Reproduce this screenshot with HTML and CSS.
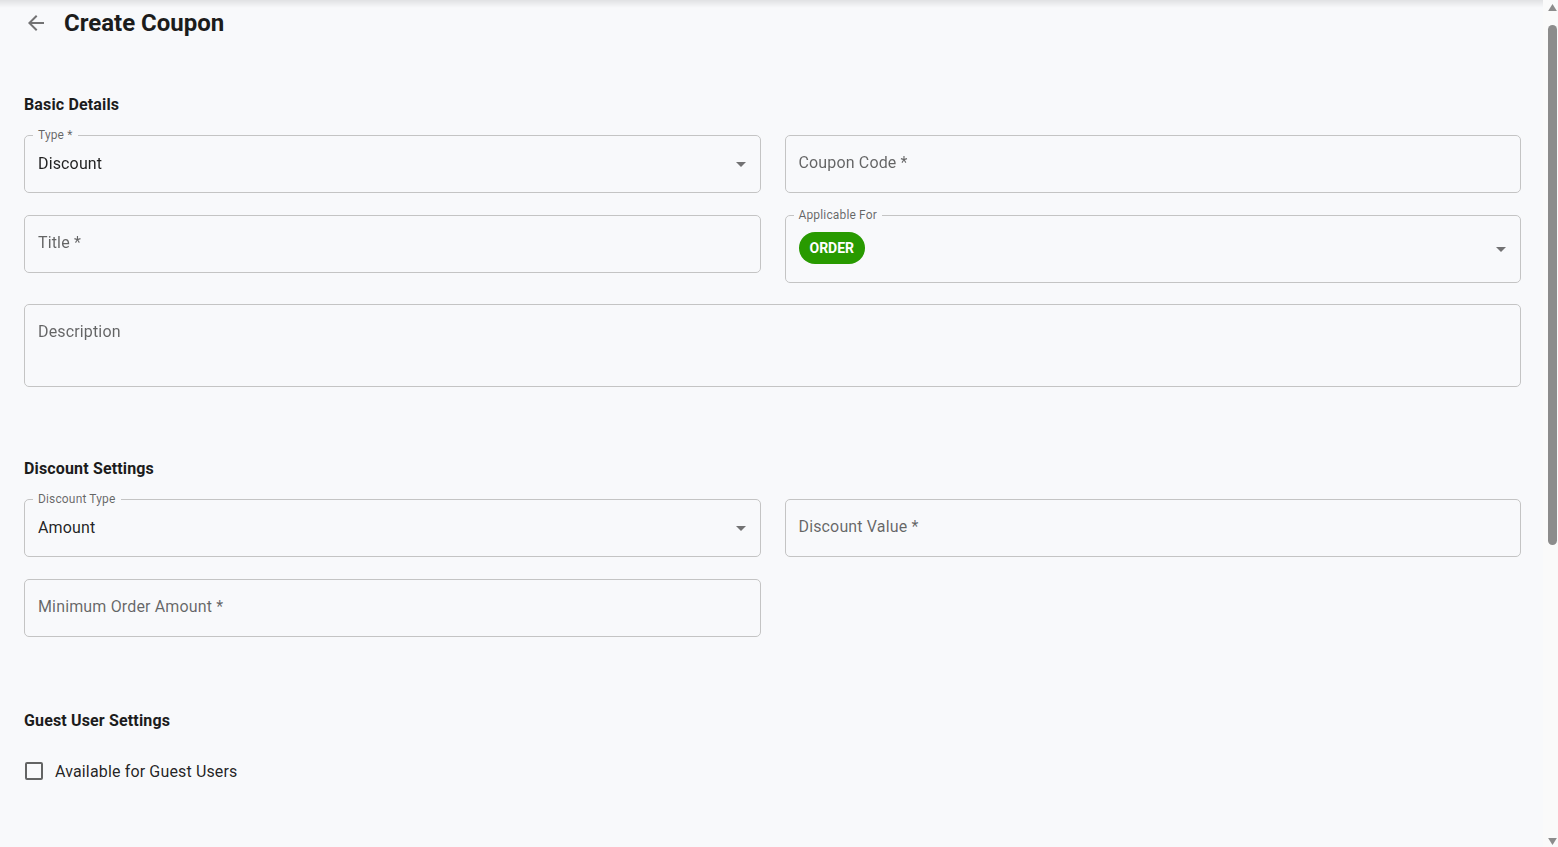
FILE: index.html
```html
<!DOCTYPE html>
<html lang="en">
<head>
  <meta charset="UTF-8">
  <title>Create Coupon</title>
  <link rel="stylesheet" href="styles.css">
</head>
<body>
  <div class="top-shade"></div>

  <!-- window scrollbar -->
  <div class="scrollbar">
    <svg class="sb-arrow up" viewBox="0 0 10 8" width="10" height="8"><path d="M5 0l5 8H0z"/></svg>
    <div class="sb-thumb"></div>
    <svg class="sb-arrow down" viewBox="0 0 10 8" width="10" height="8"><path d="M0 0h10L5 8z"/></svg>
  </div>

  <main class="page">
    <header class="page-header">
      <button class="back-btn" aria-label="Back">
        <svg viewBox="0 0 24 24" width="24" height="24"><path d="M20 11H7.83l5.59-5.59L12 4l-8 8 8 8 1.41-1.41L7.83 13H20v-2z"/></svg>
      </button>
      <h1>Create Coupon</h1>
    </header>

    <!-- Basic details -->
    <section class="section">
      <h2>Basic Details</h2>
      <div class="grid">
        <div class="field select">
          <span class="float-label">Type *</span>
          <span class="value">Discount</span>
          <svg class="arrow" viewBox="0 0 24 24" width="24" height="24"><path d="M7 10l5 5 5-5z"/></svg>
        </div>
        <div class="field">
          <span class="placeholder">Coupon Code *</span>
        </div>
        <div class="field">
          <span class="placeholder">Title *</span>
        </div>
        <div class="field select tall">
          <span class="float-label">Applicable For</span>
          <span class="chip">ORDER</span>
          <svg class="arrow" viewBox="0 0 24 24" width="24" height="24"><path d="M7 10l5 5 5-5z"/></svg>
        </div>
        <div class="field multiline wide">
          <span class="placeholder">Description</span>
        </div>
      </div>
    </section>

    <!-- Discount settings -->
    <section class="section">
      <h2>Discount Settings</h2>
      <div class="grid">
        <div class="field select">
          <span class="float-label">Discount Type</span>
          <span class="value">Amount</span>
          <svg class="arrow" viewBox="0 0 24 24" width="24" height="24"><path d="M7 10l5 5 5-5z"/></svg>
        </div>
        <div class="field">
          <span class="placeholder">Discount Value *</span>
        </div>
        <div class="field">
          <span class="placeholder">Minimum Order Amount *</span>
        </div>
      </div>
    </section>

    <!-- Guest users -->
    <section class="section last">
      <h2>Guest User Settings</h2>
      <label class="check-row">
        <span class="check-box"></span>
        <span>Available for Guest Users</span>
      </label>
    </section>
  </main>
</body>
</html>
```

FILE: styles.css
```css
html, body {
  margin: 0;
  padding: 0;
}
body {
  font-family: Roboto, "Liberation Sans", Arial, sans-serif;
  background: #f8f9fb;
  color: rgba(0, 0, 0, 0.87);
  letter-spacing: 0.15px;
}
.top-shade {
  position: fixed;
  top: 0;
  left: 0;
  right: 0;
  height: 8px;
  background: linear-gradient(rgba(0, 0, 0, 0.09), rgba(0, 0, 0, 0));
  pointer-events: none;
}
.scrollbar {
  position: fixed;
  top: 0;
  right: 0;
  bottom: 0;
  width: 15px;
  background: #fafafa;
}
.sb-thumb {
  position: absolute;
  top: 25px;
  left: 5px;
  width: 9px;
  height: 520px;
  border-radius: 5px;
  background: #8c8c8c;
}
.sb-arrow {
  position: absolute;
  left: 5px;
  fill: #8c8c8c;
  width: 9px;
  height: 7px;
}
.sb-arrow.up {
  top: 4px;
}
.sb-arrow.down {
  bottom: 2px;
}
.page {
  padding: 0 37px 530px 24px;
}
.page-header {
  height: 46px;
  display: flex;
  align-items: center;
  gap: 16px;
}
.back-btn {
  border: none;
  background: none;
  padding: 0;
  width: 24px;
  height: 24px;
  cursor: pointer;
  display: flex;
}
.back-btn svg {
  fill: rgba(0, 0, 0, 0.54);
}
.page-header h1 {
  margin: 0;
  font-size: 24px;
  font-weight: 700;
  letter-spacing: 0;
  color: #1c1c1c;
}
.section {
  margin-top: 48px;
}
.section + .section {
  margin-top: 71px;
}
.section.last {
  margin-top: 73px;
}
.section h2 {
  margin: 0 0 19px;
  font-size: 16px;
  line-height: 22px;
  font-weight: 700;
  color: #1c1c1c;
}
.grid {
  display: grid;
  grid-template-columns: 1fr 1fr;
  column-gap: 24px;
  row-gap: 22px;
  align-items: start;
}
.field {
  position: relative;
  height: 58px;
  box-sizing: border-box;
  border: 1px solid #c4c4c4;
  border-radius: 5px;
  padding: 0 13px;
  display: flex;
  align-items: center;
  font-size: 16px;
}
.field.tall {
  height: 68px;
}
.field.wide {
  grid-column: 1 / 3;
  margin-top: -1px;
}
.field.multiline {
  height: 83px;
  align-items: flex-start;
  padding-top: 17px;
}
.value {
  color: rgba(0, 0, 0, 0.87);
  margin-top: -1px;
}
.placeholder {
  color: rgba(0, 0, 0, 0.6);
  margin-top: -3px;
}
.field.multiline .placeholder {
  margin-top: 0;
}
.float-label {
  position: absolute;
  top: -8px;
  left: 8px;
  padding: 0 5px;
  font-size: 12px;
  line-height: 15px;
  color: rgba(0, 0, 0, 0.6);
  background: #f8f9fb;
}
.arrow {
  position: absolute;
  right: 7px;
  top: 50%;
  margin-top: -12px;
  fill: rgba(0, 0, 0, 0.54);
}
.chip {
  display: inline-flex;
  align-items: center;
  height: 32px;
  padding: 0 11px;
  border-radius: 16px;
  background: #289a00;
  color: #fff;
  font-size: 14px;
  font-weight: 700;
  letter-spacing: 0;
  margin-top: -3px;
}
.check-row {
  display: flex;
  align-items: center;
  gap: 12px;
  height: 24px;
  margin-top: 27px;
  padding-left: 1px;
  font-size: 16px;
  cursor: pointer;
}
.check-box {
  width: 18px;
  height: 18px;
  box-sizing: border-box;
  border: 2px solid rgba(0, 0, 0, 0.6);
  border-radius: 2px;
}
```
